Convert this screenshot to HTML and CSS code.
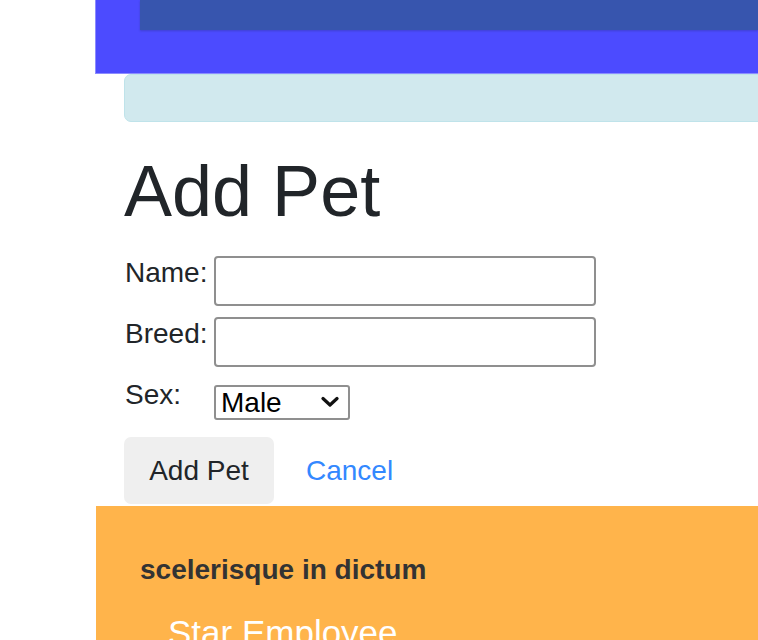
FILE: index.html
```html
<!DOCTYPE html>
<html>
<head>
<meta charset="utf-8">
<link rel="stylesheet" href="styles.css">
</head>
<body>
<div class="page">
  <header class="masthead">
    <div class="topbar"></div>
  </header>
  <main class="content">
    <div class="alert"></div>
    <h1 class="title">Add Pet</h1>
    <form class="pet-form">
      <label class="lbl" for="name">Name:</label>
      <input class="field" id="name" type="text">
      <label class="lbl" for="breed">Breed:</label>
      <input class="field" id="breed" type="text">
      <label class="lbl" for="sex">Sex:</label>
      <div class="select-cell">
        <div class="select-wrap">
          <select class="sel" id="sex">
            <option>Male</option>
            <option>Female</option>
          </select>
          <svg class="chev" width="18" height="12" viewBox="0 0 18 12" aria-hidden="true">
            <path d="M2 2.5 L9 9 L16 2.5" fill="none" stroke="#111" stroke-width="3.2" stroke-linecap="round" stroke-linejoin="round"/>
          </svg>
        </div>
      </div>
    </form>
    <div class="actions">
      <button class="btn" type="button">Add Pet</button>
      <a class="cancel" href="#">Cancel</a>
    </div>
  </main>
  <footer class="footer">
    <div class="foot-title">scelerisque in dictum</div>
    <div class="foot-item">Star Employee</div>
  </footer>
</div>
</body>
</html>
```

FILE: styles.css
```css
html, body {
  margin: 0;
  padding: 0;
  background: #ffffff;
  overflow: hidden;
}
body {
  font-family: "Liberation Sans", Arial, sans-serif;
  color: #212529;
  width: 758px;
  height: 640px;
}
.page {
  margin-left: 96px;
}
.masthead {
  height: 73px;
  background: #4c4bff;
  border-left: 1px solid #8c8cff;
  border-bottom: 1px solid #8c8cff;
  box-sizing: content-box;
  margin-left: -1px;
}
.topbar {
  margin-left: 44px;
  height: 30px;
  background: #3755ae;
  box-shadow: 0 1px 2px rgba(40, 50, 120, 0.35);
}
.content {
  padding-left: 28px;
}
.alert {
  height: 46px;
  margin-right: -20px;
  background: #d1e9ee;
  border: 1px solid #bfe3ea;
  border-radius: 7px;
}
.title {
  margin: 27px 0 23px 0;
  font-size: 72px;
  font-weight: 400;
  line-height: 84px;
  color: #212529;
}
.pet-form {
  display: grid;
  grid-template-columns: 90px 382px;
  row-gap: 11px;
  align-items: start;
}
.lbl {
  font-size: 28px;
  line-height: 34px;
  padding-left: 1px;
  color: #212529;
}
.field {
  box-sizing: border-box;
  width: 382px;
  height: 50px;
  margin: 0;
  border: 2px solid #8f8f8f;
  border-radius: 4px;
  background: #fff;
  font-size: 28px;
}
.select-cell {
  padding-top: 7px;
}
.select-wrap {
  position: relative;
  width: 136px;
  height: 35px;
}
.sel {
  -webkit-appearance: none;
  appearance: none;
  box-sizing: border-box;
  width: 136px;
  height: 35px;
  margin: 0;
  font-family: "Liberation Sans", Arial, sans-serif;
  font-size: 28px;
  line-height: 31px;
  color: #000;
  border: 2px solid #8f8f8f;
  border-radius: 3px;
  background: #fff;
  padding: 0 0 0 5px;
}
.chev {
  position: absolute;
  left: 107px;
  top: 11px;
  pointer-events: none;
}
.actions {
  display: flex;
  align-items: center;
  margin-top: 17px;
  height: 67px;
}
.btn {
  box-sizing: border-box;
  height: 67px;
  width: 150px;
  padding: 0;
  border: none;
  border-radius: 7px;
  background: #efefef;
  font-family: "Liberation Sans", Arial, sans-serif;
  font-size: 28px;
  color: #212529;
}
.cancel {
  margin-left: 32px;
  font-size: 28px;
  color: #3388ff;
  text-decoration: none;
}
.footer {
  margin-top: 2px;
  background: #ffb44b;
  height: 200px;
  padding: 45px 0 0 44px;
}
.foot-title {
  font-size: 28px;
  font-weight: 700;
  line-height: 38px;
  color: #333333;
}
.foot-item {
  margin-top: 22px;
  padding-left: 28px;
  font-size: 35px;
  line-height: 44px;
  color: #ffffff;
}
```
